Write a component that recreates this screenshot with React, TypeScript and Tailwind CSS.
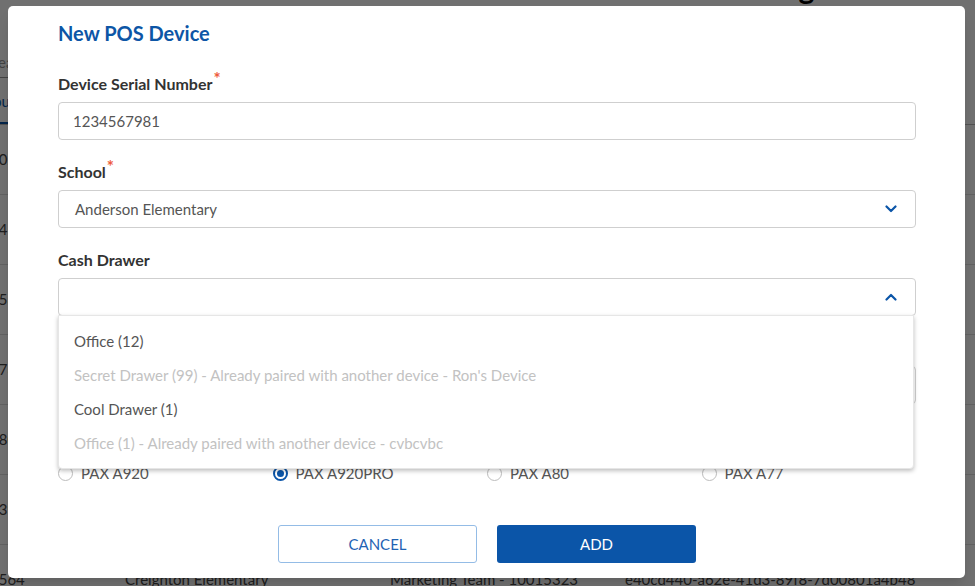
import { useState } from 'react'

type DrawerOption = {
  id: string
  label: string
  disabled: boolean
}

const drawers: DrawerOption[] = [
  { id: 'd1', label: 'Office (12)', disabled: false },
  { id: 'd2', label: "Secret Drawer (99) - Already paired with another device - Ron's Device", disabled: true },
  { id: 'd3', label: 'Cool Drawer (1)', disabled: false },
  { id: 'd4', label: 'Office (1) - Already paired with another device - cvbcvbc', disabled: true },
]

const deviceTypes = ['PAX A920', 'PAX A920PRO', 'PAX A80', 'PAX A77']

const bgRows = [
  { a: '1024', b: 'Anderson Elementary', c: 'Front Office - 10015320', d: 'a1f0c2d4-1b2e-4c3d-8e9f-0a1b2c3d4e5f' },
  { a: '3414', b: 'Bryant Elementary', c: 'Cafeteria - 10015321', d: 'b2c4d6e8-2c3d-4e5f-9a0b-1c2d3e4f5a6b' },
  { a: '5582', b: 'Carver Middle', c: 'Library - 10015322', d: 'c3d5e7f9-3d4e-5f6a-0b1c-2d3e4f5a6b7c' },
  { a: '7780', b: 'Central High', c: 'Athletics - 10015322', d: 'd4e6f8a0-4e5f-6a7b-1c2d-3e4f5a6b7c8d' },
  { a: '8801', b: 'Clark Elementary', c: 'Book Store - 10015323', d: 'e5f7a9b1-5f6a-7b8c-2d3e-4f5a6b7c8d9e' },
  { a: '9395', b: 'Clinton Elementary', c: 'Front Desk - 10015323', d: 'f6a8b0c2-6a7b-8c9d-3e4f-5a6b7c8d9e0f' },
  { a: '9564', b: 'Creighton Elementary', c: 'Marketing Team - 10015323', d: 'e40cd440-a62e-41d3-89f8-7d00801a4b48' },
]

function Chevron({ up }: { up?: boolean }) {
  return (
    <svg width="12" height="8" viewBox="0 0 12 8" className="text-[#0b55a8]">
      <path
        d={up ? 'M1.5 6.5 L6 2 L10.5 6.5' : 'M1.5 1.5 L6 6 L10.5 1.5'}
        fill="none"
        stroke="currentColor"
        strokeWidth="2.2"
        strokeLinecap="round"
        strokeLinejoin="round"
      />
    </svg>
  )
}

function Label({ text, required }: { text: string; required?: boolean }) {
  return (
    <div className="h-5 flex items-start text-[16px] leading-5 font-bold text-[#333]">
      {text}
      {required && <span className="text-[17px] leading-[14px] text-[#ee5a3c] ml-[1px] -mt-[2px]">*</span>}
    </div>
  )
}

export default function App() {
  const [serial, setSerial] = useState('1234567981')
  const [deviceType, setDeviceType] = useState('PAX A920PRO')

  return (
    <div className="relative h-[586px] w-[975px] overflow-hidden bg-white font-['Lato','Noto_Sans',sans-serif]">
      {/* page behind the dialog */}
      <div className="flex flex-col text-[15px] text-[#444]">
        <div className="h-[20px] overflow-hidden">
          <div className="-mt-[33px] pl-[560px] text-[30px] leading-[40px] font-bold text-black">POS Device Listing</div>
        </div>
        <div className="h-[58px] flex items-end">
          <div className="w-[300px] h-[30px] border-b border-[#999] flex items-center -ml-[10px] text-[#999]">Search</div>
        </div>
        <div className="h-[47px] flex items-end border-b border-[#bbb]">
          <div className="pb-[10px] pr-4 border-b-2 border-[#0b55a8] text-[#0b55a8] -ml-[14px]">Tour</div>
        </div>
        {bgRows.map((r) => (
          <div key={r.a} className="h-[70px] shrink-0 flex items-center border-b border-[#ddd]">
            <div className="w-[135px] -ml-[10px]">{r.a}</div>
            <div className="w-[265px]">{r.b}</div>
            <div className="w-[235px]">{r.c}</div>
            <div>{r.d}</div>
          </div>
        ))}
      </div>

      {/* overlay */}
      <div className="absolute inset-0 bg-black/[0.56]" />

      {/* dialog */}
      <div className="absolute left-[8px] top-[6px] w-[957px] h-[572px] bg-white rounded-[5px] shadow-lg pl-[50px] pr-[49px] pt-[13px] flex flex-col">
        <h2 className="h-[28px] text-[20px] leading-[28px] font-bold text-[#0d56a6]">New POS Device</h2>

        <div className="mt-[27px] flex flex-col gap-[8px]">
          <Label text="Device Serial Number" required />
          <input
            value={serial}
            onChange={(e) => setSerial(e.target.value)}
            className="h-[38px] w-full border border-[#cfcfcf] rounded-[4px] px-[14px] text-[15px] text-[#555] outline-none"
          />
        </div>

        <div className="mt-[22px] flex flex-col gap-[8px]">
          <Label text="School" required />
          <div className="h-[38px] w-full border border-[#cfcfcf] rounded-[4px] pl-[16px] pr-[18px] flex items-center justify-between text-[15px] text-[#555]">
            <span>Anderson Elementary</span>
            <Chevron />
          </div>
        </div>

        <div className="mt-[22px] flex flex-col gap-[8px] relative z-10">
          <Label text="Cash Drawer" />
          <div className="relative">
            <div className="h-[38px] w-full border border-[#cfcfcf] rounded-[4px] pl-[16px] pr-[18px] flex items-center justify-end">
              <Chevron up />
            </div>
            <div className="absolute left-0 right-[2px] top-[37px] bg-white rounded-b-[4px] border border-[#e6e6e6] shadow-[0_2px_4px_rgba(0,0,0,0.25)] py-[8px]">
              {drawers.map((d) => (
                <div
                  key={d.id}
                  className={`h-[34px] flex items-center pl-[15px] text-[15px] ${d.disabled ? 'text-[#c2c2c2]' : 'text-[#555]'}`}
                >
                  {d.label}
                </div>
              ))}
            </div>
          </div>
        </div>

        <div className="mt-[22px] flex flex-col gap-[8px]">
          <Label text="Cash Drawer Label" />
          <div className="h-[38px] w-full border border-[#cfcfcf] rounded-[4px]" />
        </div>

        <div className="mt-[30px] flex flex-col gap-[9px]">
          <Label text="Device Type" />
          <div className="grid grid-cols-4 h-[20px]">
            {deviceTypes.map((t) => {
              const on = t === deviceType
              return (
                <button
                  key={t}
                  type="button"
                  onClick={() => setDeviceType(t)}
                  className="flex items-center gap-[8px] text-[15px] text-[#555] leading-5"
                >
                  <span
                    className={`w-[15px] h-[15px] rounded-full flex items-center justify-center ${on ? 'border-2 border-[#0b55a8]' : 'border border-[#bdbdbd]'}`}
                  >
                    {on && <span className="w-[7px] h-[7px] rounded-full bg-[#0b55a8]" />}
                  </span>
                  {t}
                </button>
              )
            })}
          </div>
        </div>

        <div className="mt-[42px] flex justify-center gap-[20px]">
          <button
            type="button"
            className="w-[199px] h-[38px] rounded-[3px] border border-[#94bce6] text-[#1f63b3] text-[15px] bg-white"
          >
            CANCEL
          </button>
          <button type="button" className="w-[199px] h-[38px] rounded-[3px] bg-[#0b55a8] text-white text-[15px]">
            ADD
          </button>
        </div>
      </div>
    </div>
  )
}
